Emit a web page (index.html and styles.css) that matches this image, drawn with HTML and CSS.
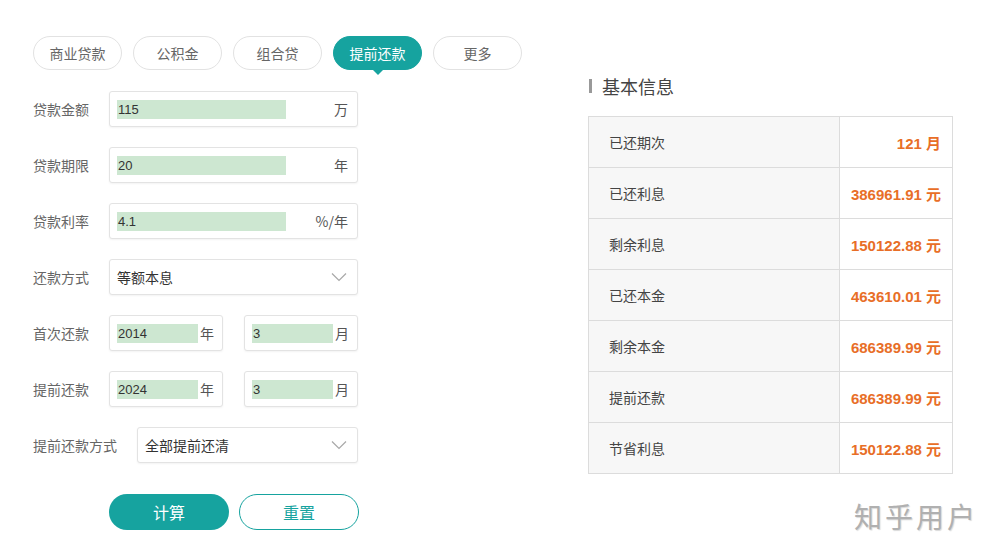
FILE: index.html
```html
<!DOCTYPE html>
<html lang="zh">
<head>
<meta charset="utf-8">
<title>提前还款计算器</title>
<link rel="stylesheet" href="styles.css">
</head>
<body>
<div class="page">
  <div class="left">
    <div class="tabs">
      <div class="tab">商业贷款</div>
      <div class="tab">公积金</div>
      <div class="tab">组合贷</div>
      <div class="tab active">提前还款</div>
      <div class="tab">更多</div>
    </div>
    <div class="form">
      <div class="row">
        <div class="label">贷款金额</div>
        <div class="box"><span class="fill">115</span><span class="unit">万</span></div>
      </div>
      <div class="row">
        <div class="label">贷款期限</div>
        <div class="box"><span class="fill">20</span><span class="unit">年</span></div>
      </div>
      <div class="row">
        <div class="label">贷款利率</div>
        <div class="box"><span class="fill">4.1</span><span class="unit">%/年</span></div>
      </div>
      <div class="row">
        <div class="label">还款方式</div>
        <div class="box select"><span class="sel-text">等额本息</span><svg class="chev" width="16" height="10" viewBox="0 0 16 10"><path d="M1 1.5 L8 8.5 L15 1.5" fill="none" stroke="#a8a8a8" stroke-width="1.2"/></svg></div>
      </div>
      <div class="row">
        <div class="label">首次还款</div>
        <div class="pair">
          <div class="box half"><span class="fill short">2014</span><span class="unit">年</span></div>
          <div class="box half"><span class="fill short">3</span><span class="unit">月</span></div>
        </div>
      </div>
      <div class="row">
        <div class="label">提前还款</div>
        <div class="pair">
          <div class="box half"><span class="fill short">2024</span><span class="unit">年</span></div>
          <div class="box half"><span class="fill short">3</span><span class="unit">月</span></div>
        </div>
      </div>
      <div class="row">
        <div class="label wide">提前还款方式</div>
        <div class="box select narrow"><span class="sel-text">全部提前还清</span><svg class="chev" width="16" height="10" viewBox="0 0 16 10"><path d="M1 1.5 L8 8.5 L15 1.5" fill="none" stroke="#a8a8a8" stroke-width="1.2"/></svg></div>
      </div>
    </div>
    <div class="buttons">
      <div class="btn primary">计算</div>
      <div class="btn outline">重置</div>
    </div>
  </div>
  <div class="right">
    <div class="title">基本信息</div>
    <table class="info">
      <tr><td class="k">已还期次</td><td class="v">121 月</td></tr>
      <tr><td class="k">已还利息</td><td class="v">386961.91 元</td></tr>
      <tr><td class="k">剩余利息</td><td class="v">150122.88 元</td></tr>
      <tr><td class="k">已还本金</td><td class="v">463610.01 元</td></tr>
      <tr><td class="k">剩余本金</td><td class="v">686389.99 元</td></tr>
      <tr><td class="k">提前还款</td><td class="v">686389.99 元</td></tr>
      <tr><td class="k">节省利息</td><td class="v">150122.88 元</td></tr>
    </table>
  </div>
  <div class="watermark">知乎用户</div>
</div>
</body>
</html>
```

FILE: styles.css
```css
* { box-sizing: border-box; }
html, body { margin: 0; padding: 0; background: #fff; }
body {
  font-family: "Liberation Sans", "Noto Sans CJK SC", sans-serif;
  color: #333;
  font-size: 13px;
}
.page {
  position: relative;
  width: 1005px;
  height: 548px;
  display: flex;
  overflow: hidden;
}
.left {
  padding: 36px 0 0 33px;
  width: 588px;
  flex: none;
}
.tabs {
  display: flex;
  gap: 11px;
}
.tab {
  position: relative;
  width: 89px;
  height: 34px;
  border: 1px solid #e2e2e2;
  border-radius: 17px;
  display: flex;
  align-items: center;
  justify-content: center;
  font-size: 14px;
  color: #666;
  background: #fff;
}
.tab.active {
  background: #16a39f;
  border-color: #16a39f;
  color: #fff;
}
.tab.active::after {
  content: "";
  position: absolute;
  left: 50%;
  bottom: -6px;
  margin-left: -6px;
  border-left: 6px solid transparent;
  border-right: 6px solid transparent;
  border-top: 6px solid #16a39f;
}
.form {
  margin-top: 21px;
  display: flex;
  flex-direction: column;
  gap: 20px;
}
.row {
  display: flex;
  align-items: center;
  height: 36px;
}
.label {
  width: 76px;
  color: #666;
  font-size: 14px;
  font-family: "Noto Sans CJK SC", sans-serif;
}
.label.wide { width: 104px; }
.box {
  width: 249px;
  height: 36px;
  border: 1px solid #e3e3e3;
  border-radius: 3px;
  box-shadow: 0 1px 2px rgba(0,0,0,0.05);
  display: flex;
  align-items: center;
  padding-left: 7px;
  padding-right: 9px;
  background: #fff;
}
.box.narrow { width: 221px; }
.fill {
  width: 169px;
  height: 19px;
  line-height: 19px;
  background: #cde7d1;
  color: #333;
  font-size: 13px;
  padding-left: 1px;
}
.unit {
  margin-left: auto;
  color: #555;
  font-size: 14px;
  font-family: "Noto Sans CJK SC", sans-serif;
}
.pair {
  display: flex;
  gap: 21px;
}
.box.half {
  width: 114px;
  padding-right: 8px;
}
.fill.short { width: 81px; }
.select .sel-text {
  color: #333;
  font-size: 14px;
  font-family: "Noto Sans CJK SC", sans-serif;
}
.select .chev {
  margin-left: auto;
  margin-right: 1px;
}
.buttons {
  margin-top: 31px;
  padding-left: 76px;
  display: flex;
  gap: 10px;
}
.btn {
  width: 120px;
  height: 36px;
  border-radius: 18px;
  display: flex;
  align-items: center;
  justify-content: center;
  font-size: 16px;
  font-family: "Noto Sans CJK SC", sans-serif;
}
.btn.primary {
  background: #16a39f;
  color: #fff;
}
.btn.outline {
  border: 1px solid #16a39f;
  color: #16a39f;
  background: #fff;
}
.right {
  padding-top: 74px;
  width: 365px;
  flex: none;
}
.title {
  font-size: 18px;
  color: #444;
  border-left: 3px solid #999;
  padding-left: 10px;
  line-height: 14px;
  height: 14px;
  display: flex;
  align-items: center;
  margin-top: 5px;
  margin-left: 1px;
  font-family: "Noto Sans CJK SC", sans-serif;
}
.info {
  margin-top: 23px;
  border-collapse: collapse;
  width: 365px;
}
.info td {
  border: 1px solid #dcdcdc;
  height: 51px;
  padding: 0;
}
.info td.k {
  width: 251px;
  background: #f7f7f7;
  padding-left: 20px;
  color: #444;
  font-size: 14px;
  font-family: "Noto Sans CJK SC", sans-serif;
}
.info td.v {
  text-align: right;
  padding-right: 11px;
  color: #e86e27;
  font-weight: bold;
  font-size: 15px;
}
.watermark {
  position: absolute;
  left: 854px;
  top: 496px;
  font-size: 28px;
  color: #b0b0b0;
  letter-spacing: 3px;
  font-family: "Noto Sans CJK SC", sans-serif;
  text-shadow: 1px 1px 1px rgba(0,0,0,0.15);
}
```
